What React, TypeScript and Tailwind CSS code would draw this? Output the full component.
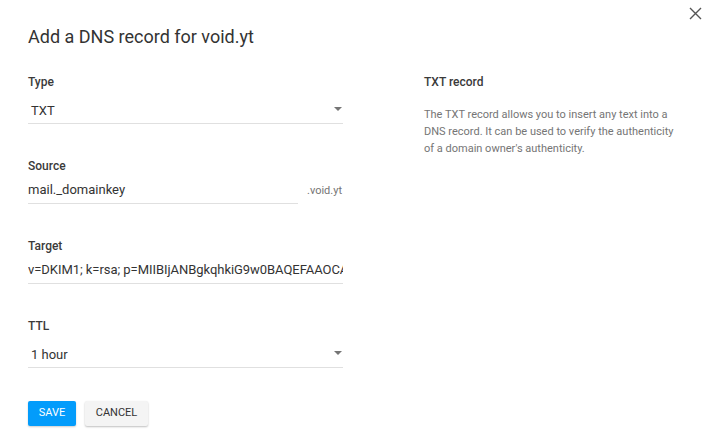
import React from "react";

const font = { fontFamily: "Roboto, 'Liberation Sans', sans-serif" };

const Label = ({ children }: { children: React.ReactNode }) => (
  <div className="h-4 text-xs leading-4 font-medium text-[#3a3a3a]">{children}</div>
);

const SelectField = ({ value }: { value: string }) => (
  <div className="mt-[7px] flex h-[27px] items-center justify-between border-b border-[#e0e0e0] pl-[3px] pr-[1px] pt-[1px]">
    <span className="text-[13px] text-[#333]">{value}</span>
    <svg width="8" height="4" viewBox="0 0 8 4" className="mb-[4px]">
      <path d="M0 0h8L4 4z" fill="#757575" />
    </svg>
  </div>
);

export default function App() {
  return (
    <div style={font} className="relative h-[444px] w-[709px] bg-white">
      <button className="absolute right-[6px] top-[6px] p-[1px]" aria-label="Close">
        <svg width="13" height="13" viewBox="0 0 13 13">
          <path d="M1 1l11 11M12 1L1 12" stroke="#555" strokeWidth="1.4" />
        </svg>
      </button>

      <div className="px-[28px] pt-[25px]">
        <h1 className="text-[18px] leading-6 text-[#333]">Add a DNS record for void.yt</h1>

        <div className="mt-[25px] flex">
          {/* form column */}
          <div className="w-[315px]">
            <Label>Type</Label>
            <SelectField value="TXT" />

            <div className="mt-[34px]">
              <Label>Source</Label>
              <div className="mt-[3px] flex items-end">
                <div className="flex h-[27px] w-[270px] items-center border-b border-[#e0e0e0] text-[13px] text-[#333]">
                  mail._domainkey
                </div>
                <span className="ml-[9px] pb-[5px] text-[11px] text-[#757575]">.void.yt</span>
              </div>
            </div>

            <div className="mt-[34px]">
              <Label>Target</Label>
              <div className="mt-[3px] flex h-[27px] items-center overflow-hidden whitespace-nowrap border-b border-[#e0e0e0] text-[13px] tracking-[-0.05px] text-[#333]">
                v=DKIM1; k=rsa; p=MIIBIjANBgkqhkiG9w0BAQEFAAOCA
              </div>
            </div>

            <div className="mt-[34px]">
              <Label>TTL</Label>
              <SelectField value="1 hour" />
            </div>

            <div className="mt-[33px] flex gap-[9px]">
              <button className="h-[25px] w-[48px] rounded-[2px] bg-[#039cfb] text-[11px] text-white shadow-[0_1px_2px_rgba(0,0,0,0.2)]">
                SAVE
              </button>
              <button className="h-[25px] w-[63px] rounded-[2px] bg-[#f4f4f4] text-[11px] text-[#333] shadow-[0_1px_2px_rgba(0,0,0,0.25)]">
                CANCEL
              </button>
            </div>
          </div>

          {/* help column */}
          <div className="ml-[81px] w-[270px]">
            <div className="text-xs leading-4 font-medium text-[#3a3a3a]">TXT record</div>
            <p className="mt-[16px] text-[11px] leading-[17px] text-[#757575]">
              The TXT record allows you to insert any text into a DNS record. It can be used to verify the
              authenticity of a domain owner's authenticity.
            </p>
          </div>
        </div>
      </div>
    </div>
  );
}
